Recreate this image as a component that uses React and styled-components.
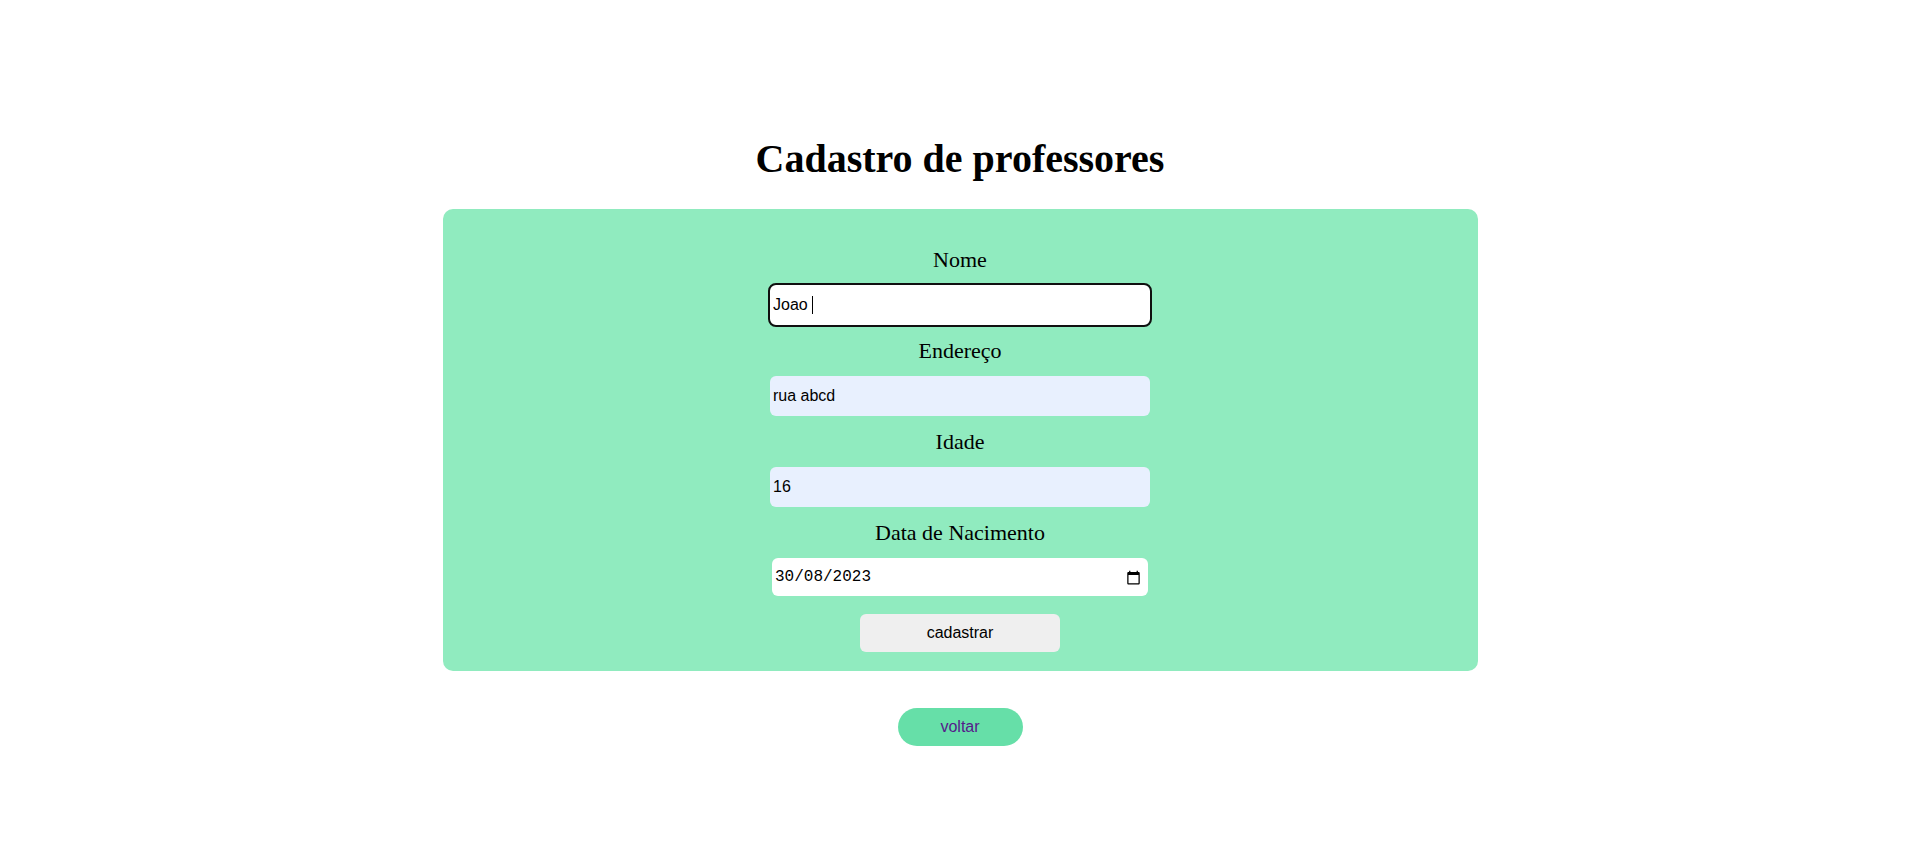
import React from 'react';
import styled, { createGlobalStyle } from 'styled-components';

const GlobalStyle = createGlobalStyle`
  body {
    margin: 0;
    background: #ffffff;
    font-family: "Liberation Serif", "Times New Roman", serif;
    color: #000000;
  }
`;

// pagina
const Page = styled.div`
  display: flex;
  flex-direction: column;
  align-items: center;
  padding-top: 135px;
`;

const Title = styled.h1`
  margin: 0 0 27px;
  font-size: 40px;
  font-weight: bold;
  line-height: normal;
`;

// formulario
const Panel = styled.form`
  width: 1035px;
  box-sizing: border-box;
  display: flex;
  flex-direction: column;
  align-items: center;
  padding: 38px 0 19px;
  background: #90ebbf;
  border-radius: 10px;
`;

const Label = styled.label`
  display: block;
  font-size: 22px;
  line-height: 25px;
  margin-bottom: 13px;
`;

const InputWrap = styled.div`
  position: relative;
  margin-bottom: 13px;
`;

const Input = styled.input`
  display: block;
  width: 380px;
  height: 40px;
  box-sizing: border-box;
  padding: 0 3px;
  border: none;
  border-radius: 6px;
  font-family: "Liberation Sans", Arial, sans-serif;
  font-size: 16px;
  color: #000000;
  background: ${(props) => (props.$filled ? '#e8f0fe' : '#ffffff')};
  outline: ${(props) => (props.$focused ? '2px solid #101010' : 'none')};
  box-shadow: ${(props) => (props.$focused ? 'inset 0 0 0 1px #ffffff' : 'none')};
`;

const Caret = styled.span`
  position: absolute;
  left: 42px;
  top: 11px;
  width: 1px;
  height: 18px;
  background: #000000;
`;

// data
const DateField = styled.div`
  width: 376px;
  height: 38px;
  box-sizing: border-box;
  display: flex;
  align-items: center;
  padding: 0 7px 0 3px;
  background: #ffffff;
  border-radius: 6px;
`;

const DateText = styled.input`
  flex: 1;
  min-width: 0;
  padding: 0;
  border: none;
  background: transparent;
  font-family: "Liberation Mono", "DejaVu Sans Mono", monospace;
  font-size: 16px;
  color: #000000;
  outline: none;
`;

const CalendarIcon = () => (
  <svg width="15" height="15" viewBox="0 0 24 24" fill="#000000">
    <path d="M20 3h-1V1h-2v2H7V1H5v2H4c-1.1 0-2 .9-2 2v16c0 1.1.9 2 2 2h16c1.1 0 2-.9 2-2V5c0-1.1-.9-2-2-2zm0 18H4V8h16v13z" />
  </svg>
);

const Submit = styled.button`
  margin-top: 18px;
  width: 200px;
  height: 38px;
  border: none;
  border-radius: 6px;
  background: #efefef;
  font-family: "Liberation Sans", Arial, sans-serif;
  font-size: 16px;
  color: #000000;
  cursor: pointer;
`;

// voltar
const BackLink = styled.a`
  margin-top: 37px;
  width: 125px;
  height: 38px;
  display: flex;
  align-items: center;
  justify-content: center;
  border-radius: 19px;
  background: #66dfa8;
  color: #551a8b;
  font-family: "Liberation Sans", Arial, sans-serif;
  font-size: 16px;
  text-decoration: none;
`;

export default function App() {
  return (
    <>
      <GlobalStyle />
      <Page>
        <Title>Cadastro de professores</Title>
        <Panel onSubmit={(e) => e.preventDefault()}>
          <Label htmlFor="nome">Nome</Label>
          <InputWrap>
            <Input id="nome" $focused defaultValue="Joao " />
            <Caret />
          </InputWrap>
          <Label htmlFor="endereco">Endereço</Label>
          <InputWrap>
            <Input id="endereco" $filled defaultValue="rua abcd" />
          </InputWrap>
          <Label htmlFor="idade">Idade</Label>
          <InputWrap>
            <Input id="idade" type="number" $filled defaultValue="16" />
          </InputWrap>
          <Label htmlFor="nascimento">Data de Nacimento</Label>
          <DateField>
            <DateText id="nascimento" defaultValue="30/08/2023" />
            <CalendarIcon />
          </DateField>
          <Submit type="submit">cadastrar</Submit>
        </Panel>
        <BackLink href="#">voltar</BackLink>
      </Page>
    </>
  );
}
